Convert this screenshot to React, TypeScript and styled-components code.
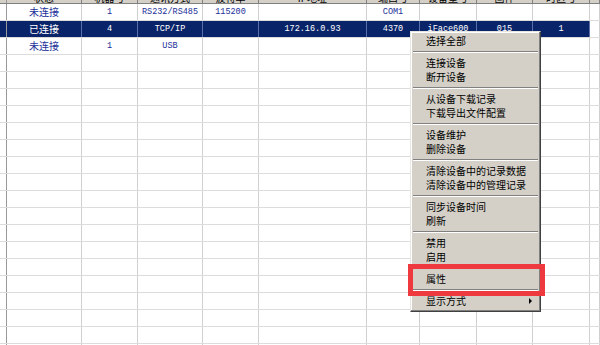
import React from "react";
import styled, { createGlobalStyle } from "styled-components";

const Global = createGlobalStyle`
  html, body { margin: 0; padding: 0; background: #fff; }
  body { font-family: "Noto Sans CJK SC", "Liberation Sans", sans-serif; }
`;

const COLS = "7px 75px 56px 65px 56px 108px 53px 57px 56px 57px 10px";

const Page = styled.div`
  position: relative;
  width: 600px;
  height: 345px;
  overflow: hidden;
  background: #fff;
`;

const Grid = styled.div`
  display: flex;
  flex-direction: column;
  margin-top: -13px;
`;

const Row = styled.div<{ $selected?: boolean; $header?: boolean }>`
  display: grid;
  grid-template-columns: ${COLS};
  height: 17px;
  background: ${(p) => (p.$header ? "#d4d0c8" : "#fff")};
  border-bottom: 1px solid ${(p) => (p.$header ? "#808080" : "#dcdcdc")};
  box-sizing: border-box;
`;

const Cell = styled.div<{ $mono?: boolean; $selected?: boolean; $header?: boolean; $first?: boolean }>`
  display: flex;
  align-items: center;
  justify-content: center;
  overflow: hidden;
  white-space: nowrap;
  box-sizing: border-box;
  border-right: 1px solid
    ${(p) => (p.$first ? "#9a9a9a" : p.$header ? "#808080" : p.$selected ? "#5a6fa8" : "#d0d0d0")};
  background: ${(p) => (p.$selected ? "#0a246a" : "transparent")};
  color: ${(p) => (p.$selected ? "#ffffff" : p.$header ? "#000" : "#22309a")};
  font-family: ${(p) =>
    p.$mono ? `"Liberation Mono", "Noto Sans CJK SC", monospace` : `"Noto Sans CJK SC", sans-serif`};
  font-size: ${(p) => (p.$mono ? "8.5px" : "10px")};
  line-height: 16px;
  padding-top: ${(p) => (p.$header ? "6px" : "0")};
`;

const Menu = styled.div`
  position: absolute;
  left: 410px;
  top: 31px;
  width: 131px;
  box-sizing: border-box;
  background: #d4d0c8;
  border-top: 1px solid #e8e6e0;
  border-left: 1px solid #e8e6e0;
  border-right: 1px solid #404040;
  border-bottom: 1px solid #404040;
  box-shadow: inset -1px -1px 0 #808080, inset 1px 1px 0 #ffffff;
  padding: 2px 2px 3px 2px;
  display: flex;
  flex-direction: column;
`;

const Item = styled.div`
  height: 14px;
  line-height: 14px;
  padding-left: 13px;
  padding-right: 6px;
  font-family: "Noto Sans CJK SC", sans-serif;
  font-size: 10px;
  color: #000;
  display: flex;
  align-items: center;
  justify-content: space-between;
`;

const Sep = styled.div`
  height: 8px;
  display: flex;
  align-items: center;
  &::before {
    content: "";
    flex: 1;
    height: 0;
    border-top: 1px solid #808080;
    border-bottom: 1px solid #ffffff;
  }
`;

const Arrow = styled.span`
  width: 0;
  height: 0;
  border-top: 3px solid transparent;
  border-bottom: 3px solid transparent;
  border-left: 3px solid #000;
`;

const Highlight = styled.div`
  position: absolute;
  left: 408px;
  top: 264px;
  width: 137px;
  height: 32px;
  box-sizing: border-box;
  border: 5px solid #ee3a3f;
`;

type RowData = { cells: string[]; selected?: boolean };

const MONO = [false, false, true, true, true, true, true, true, true, true, false];

const header = ["", "状态", "机器号", "通讯方式", "波特率", "IP地址", "端口号", "设备型号", "固件", "时区号", ""];

const rows: RowData[] = [
  { cells: ["", "未连接", "1", "RS232/RS485", "115200", "", "COM1", "", "", "", ""] },
  { cells: ["", "已连接", "4", "TCP/IP", "", "172.16.0.93", "4370", "iFace600", "015", "1", ""], selected: true },
  { cells: ["", "未连接", "1", "USB", "", "", "", "", "", "", ""] },
];

const emptyCount = 18;

export default function App() {
  const empties: RowData[] = Array.from({ length: emptyCount }, () => ({ cells: Array(11).fill("") }));
  return (
    <>
      <Global />
      <Page>
        <Grid>
          <Row $header>
            {header.map((h, i) => (
              <Cell key={i} $header $first={i === 0}>
                {h}
              </Cell>
            ))}
          </Row>
          {[...rows, ...empties].map((r, ri) => (
            <Row key={ri}>
              {r.cells.map((c, ci) => (
                <Cell
                  key={ci}
                  $mono={MONO[ci]}
                  $first={ci === 0}
                  $selected={r.selected && ci < 10}
                >
                  {c}
                </Cell>
              ))}
            </Row>
          ))}
        </Grid>
        <Menu>
          <Item>选择全部</Item>
          <Sep />
          <Item>连接设备</Item>
          <Item>断开设备</Item>
          <Sep />
          <Item>从设备下载记录</Item>
          <Item>下载导出文件配置</Item>
          <Sep />
          <Item>设备维护</Item>
          <Item>删除设备</Item>
          <Sep />
          <Item>清除设备中的记录数据</Item>
          <Item>清除设备中的管理记录</Item>
          <Sep />
          <Item>同步设备时间</Item>
          <Item>刷新</Item>
          <Sep />
          <Item>禁用</Item>
          <Item>启用</Item>
          <Sep />
          <Item>属性</Item>
          <Sep />
          <Item>
            显示方式
            <Arrow />
          </Item>
        </Menu>
        <Highlight />
      </Page>
    </>
  );
}
